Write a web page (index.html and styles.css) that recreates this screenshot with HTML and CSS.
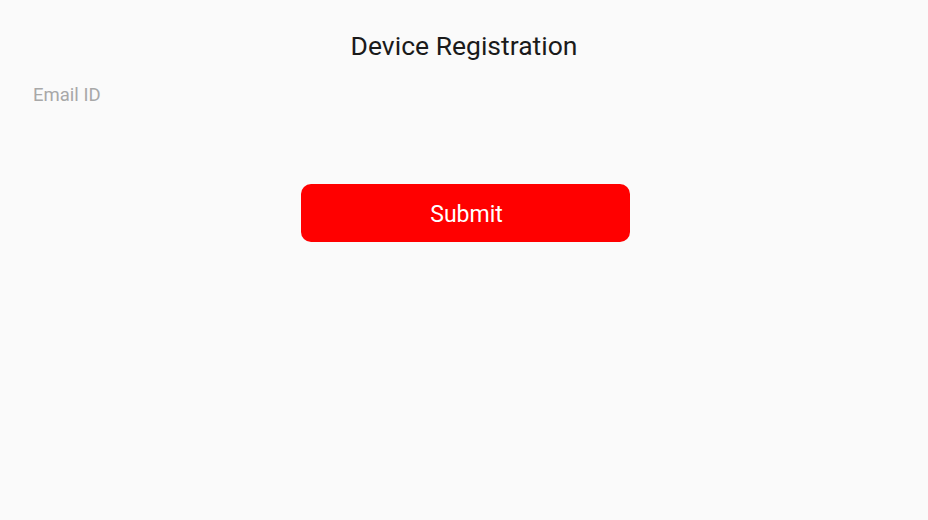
FILE: index.html
```html
<!DOCTYPE html>
<html lang="en">
<head>
    <meta charset="UTF-8">
    <meta name="viewport" content="width=device-width, initial-scale=1.0">
    <title>Device Registration</title>
    <link rel="stylesheet" href="styles.css">
</head>
<body>
<div class="page">
    <h1 class="title">Device Registration</h1>
    <form id="deviceForm" class="form">
        <input class="email" placeholder="Email ID" type="email" id="email">
        <button class="submit" type="submit">Submit</button>
    </form>
</div>
</body>
</html>
```

FILE: styles.css
```css
body {
    margin: 0;
    background-color: #fafafa;
    font-family: Roboto, "Liberation Sans", sans-serif;
}

.page {
    padding-top: 30px;
}

.title {
    margin: 0;
    text-align: center;
    font-size: 26.5px;
    font-weight: 400;
    line-height: 32px;
    color: #1a1a1a;
}

.form {
    display: flex;
    flex-direction: column;
}

.email {
    margin: 18px 0 0 33px;
    padding: 0;
    width: 400px;
    height: 30px;
    border: none;
    background: transparent;
    font-family: inherit;
    font-size: 18.5px;
    outline: none;
}

.email::placeholder {
    color: #a8a8a8;
    opacity: 1;
}

.submit {
    align-self: center;
    margin-top: 74px;
    margin-left: 2px;
    width: 329px;
    height: 58px;
    padding: 2px 0 0 3px;
    border: none;
    border-radius: 10px;
    background-color: #ff0000;
    color: white;
    font-family: inherit;
    font-size: 23px;
    cursor: pointer;
}
```
